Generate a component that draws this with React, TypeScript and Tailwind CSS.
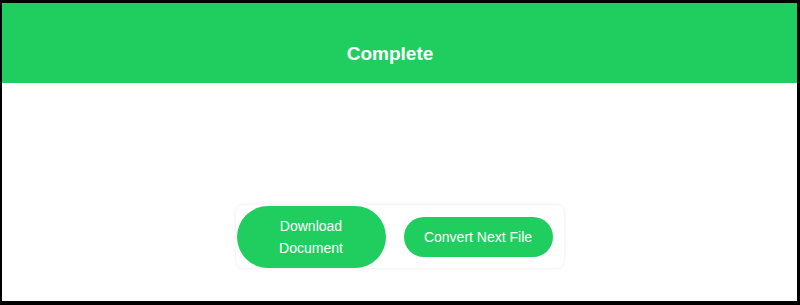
import React from "react";

export default function App() {
  return (
    <div
      className="w-[800px] h-[305px] bg-white border-solid border-black border-t-[3px] border-l-2 border-r-[3px] border-b-4 flex flex-col overflow-hidden"
      style={{ fontFamily: '"Liberation Sans", Arial, sans-serif' }}
    >
      <div className="h-[80px] shrink-0 bg-[#1fce5f] flex justify-center pt-[40px] pr-[19px]">
        <h3 className="text-[19px] leading-[22px] font-bold text-white m-0">Complete</h3>
      </div>
      <div className="flex-1 flex justify-center pt-[122px]">
        <div className="h-[63px] flex items-center gap-[18px] pl-px pr-[11px] bg-white rounded-lg shadow-[0_0_4px_rgba(0,0,0,0.09)] self-start">
          <button className="w-[149px] px-5 py-[9px] rounded-full bg-[#1fce5f] text-white text-[14px] leading-[22px] text-center">
            Download Document
          </button>
          <button className="w-[149px] px-5 py-[9px] rounded-full bg-[#1fce5f] text-white text-[14px] leading-[22px] text-center whitespace-nowrap">
            Convert Next File
          </button>
        </div>
      </div>
    </div>
  );
}
